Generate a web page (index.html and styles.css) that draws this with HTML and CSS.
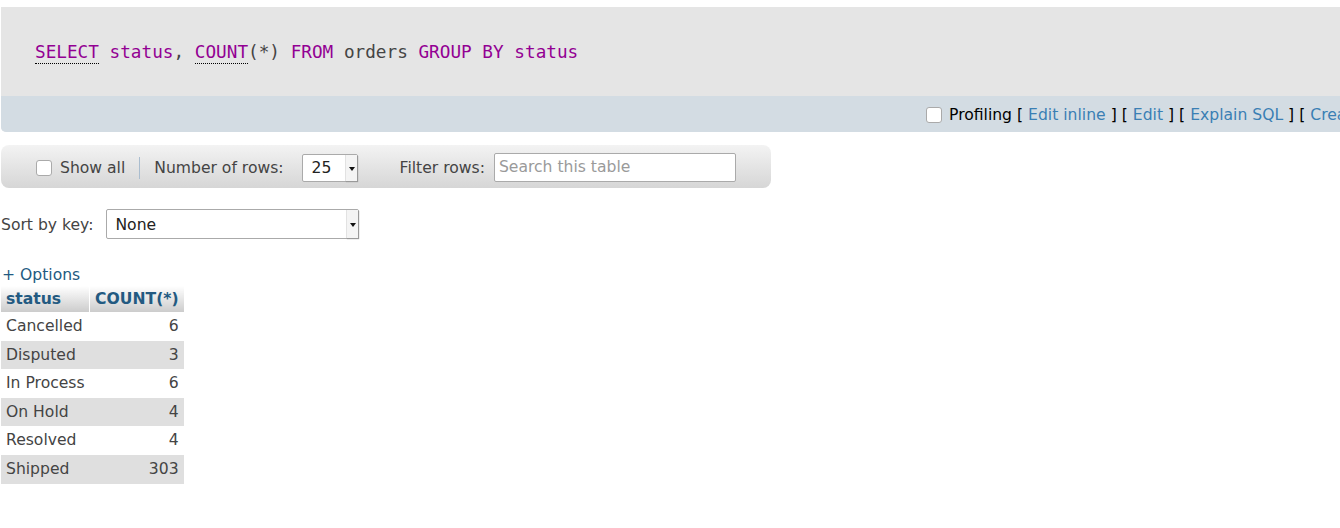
FILE: index.html
```html
<!DOCTYPE html>
<html>
<head>
<meta charset="utf-8">
<link rel="stylesheet" href="styles.css">
</head>
<body>
<div class="sqlquery">
  <div class="code"><a class="kw doc">SELECT</a> <span class="col">status</span><span class="pl">,</span> <a class="kw doc">COUNT</a><span class="pl">(*)</span> <span class="kw">FROM</span> <span class="pl">orders</span> <span class="kw">GROUP BY</span> <span class="col">status</span></div>
  <div class="tools">
    <span class="cb"></span><span class="prof">Profiling</span> <span class="br">[</span> <a>Edit inline</a> <span class="br">]</span> <span class="br">[</span> <a>Edit</a> <span class="br">]</span> <span class="br">[</span> <a>Explain SQL</a> <span class="br">]</span> <span class="br">[</span> <a>Create PHP code</a> <span class="br">]</span> <span class="br">[</span> <a>Refresh</a> <span class="br">]</span>
  </div>
</div>

<div class="navbar">
  <span class="cb"></span><span class="lbl">Show all</span>
  <span class="sep"></span>
  <span class="lbl">Number of rows:</span>
  <div class="sel small"><span class="val">25</span><span class="arrow"></span></div>
  <span class="lbl filter">Filter rows:</span>
  <div class="search">Search this table</div>
</div>

<div class="sortrow">
  <span class="lbl">Sort by key:</span>
  <div class="sel wide"><span class="val">None</span><span class="arrow"></span></div>
</div>

<div class="options"><a>+ Options</a></div>

<table class="data">
  <thead><tr><th>status</th><th>COUNT(*)</th></tr></thead>
  <tbody>
    <tr><td>Cancelled</td><td class="num">6</td></tr>
    <tr><td>Disputed</td><td class="num">3</td></tr>
    <tr><td>In Process</td><td class="num">6</td></tr>
    <tr><td>On Hold</td><td class="num">4</td></tr>
    <tr><td>Resolved</td><td class="num">4</td></tr>
    <tr><td>Shipped</td><td class="num">303</td></tr>
  </tbody>
</table>
</body>
</html>
```

FILE: styles.css
```css
html, body {
  margin: 0;
  padding: 0;
  overflow: hidden;
  background: #fff;
}
body {
  font-family: "DejaVu Sans", sans-serif;
  font-size: 15.6px;
  color: #444;
  padding-left: 1px;
  padding-top: 7px;
}
a { color: #3a7fb4; text-decoration: none; }

.sqlquery {
  width: 1500px;
  background: #e5e5e5;
  border-bottom-left-radius: 5px;
  overflow: hidden;
}
.code {
  font-family: "DejaVu Sans Mono", monospace;
  font-size: 17.7px;
  line-height: 29px;
  padding: 31px 34px 29px;
  color: #444;
  white-space: pre;
}
.code .kw { color: #930093; }
.code .col { color: #930093; }
.code .pl { color: #444; }
.code .doc {
  border-bottom: 1px dotted #000;
  padding-bottom: 1px;
}
.tools {
  background: #d3dce3;
  height: 36px;
  box-sizing: border-box;
  padding-top: 1px;
  padding-left: 925px;
  white-space: nowrap;
  color: #000;
  display: flex;
  align-items: center;
}
.tools .cb { margin-right: 7px; }
.tools .prof { color: #000; margin-right: 5px; }
.tools .br { color: #000; }
.tools a { margin: 0 5px; }
.tools .br + .br { margin-left: 5px; }

.cb {
  display: inline-block;
  width: 14px;
  height: 14px;
  border: 1px solid #aaa;
  border-radius: 3px;
  background: #fff;
  box-sizing: content-box;
  margin-right: 8px;
  flex: none;
}

.navbar {
  margin-top: 13px;
  width: 770px;
  height: 43px;
  box-sizing: border-box;
  border-radius: 8px;
  background: linear-gradient(#f3f3f3, #d6d6d6);
  display: flex;
  align-items: center;
  padding-left: 35px;
  padding-top: 2px;
  color: #444;
}
.navbar .sep {
  width: 1px;
  height: 22px;
  background: #aabdcf;
  margin: 0 14px 0 14px;
}
.sel {
  display: flex;
  align-items: center;
  background: #fff;
  border: 1px solid #aaa;
  border-radius: 2px;
  box-sizing: border-box;
  color: #222;
  position: relative;
}
.sel .val { flex: 1; padding-left: 9px; }
.sel .arrow {
  align-self: stretch;
  width: 11px;
  background: #f4f4f4;
  border-left: 1px solid #e2e2e2;
  box-shadow: 1px 1px 1px #999;
  position: relative;
}
.sel .arrow::after {
  content: "";
  position: absolute;
  left: 3px;
  top: 50%;
  margin-top: -1px;
  border-left: 3px solid transparent;
  border-right: 3px solid transparent;
  border-top: 4px solid #111;
}
.sel.small {
  width: 56px;
  height: 28px;
  margin-left: 18px;
}
.sel.wide {
  width: 253px;
  height: 30px;
  margin-left: 13px;
}
.sel.wide .val { padding-left: 8px; padding-top: 1px; }
.filter { margin-left: 42px; }
.search {
  margin-left: 9px;
  width: 242px;
  height: 29px;
  box-sizing: border-box;
  border: 1px solid #aaa;
  border-radius: 2px;
  background: #fff;
  color: #9a9a9a;
  padding-left: 4px;
  line-height: 27px;
}

.sortrow {
  margin-top: 21px;
  display: flex;
  align-items: center;
}
.sortrow .lbl { padding-top: 2px; }

.options {
  margin-top: 26px;
  line-height: 20px;
  padding-left: 1px;
}
.options a { color: #235a81; }

table.data {
  border-collapse: collapse;
  margin-top: 1px;
}
table.data th {
  background: linear-gradient(#fff, #ccc);
  color: #235a81;
  font-weight: bold;
  text-align: left;
  padding: 4px 5px;
  line-height: 18px;
}
table.data th + th { border-left: 1px solid #fff; }
table.data td {
  padding: 5px 5px;
  line-height: 18.6px;
  color: #444;
}
table.data td.num { text-align: right; }
table.data tbody tr:nth-child(even) td { background: #dfdfdf; }
```
